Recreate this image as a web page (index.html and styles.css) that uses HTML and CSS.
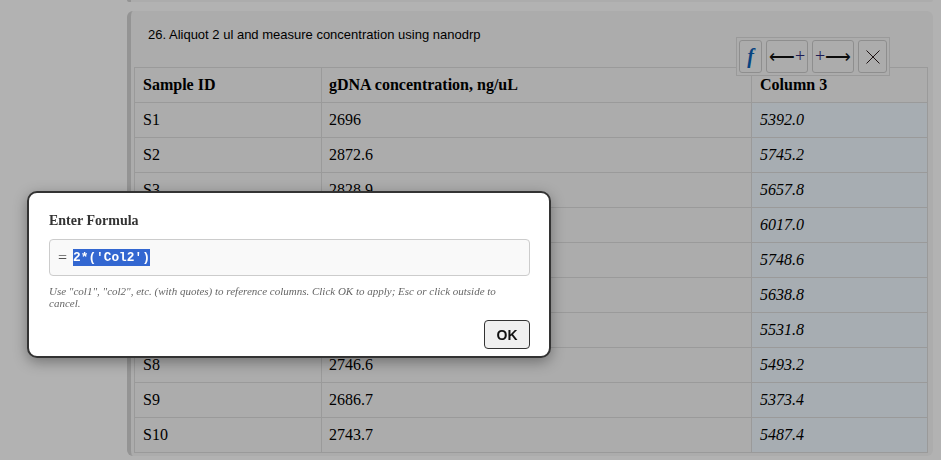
FILE: index.html
```html
<!DOCTYPE html>
<html lang="en">
<head>
    <meta charset="UTF-8">
    <meta name="viewport" content="width=device-width, initial-scale=1.0">
    <title>Protocol step</title>
    <link rel="stylesheet" href="styles.css">
</head>
<body>
    <div class="page">
        <div class="step step-prev"></div>
        <div class="step">
            <p class="step-title">26. Aliquot 2 ul and measure concentration using nanodrp</p>
            <table class="data-table">
                <thead>
                    <tr><th class="col-a">Sample ID</th><th class="col-b">gDNA concentration, ng/uL</th><th>Column 3</th></tr>
                </thead>
                <tbody>
                    <tr><td>S1</td><td>2696</td><td class="calc">5392.0</td></tr>
                    <tr><td>S2</td><td>2872.6</td><td class="calc">5745.2</td></tr>
                    <tr><td>S3</td><td>2828.9</td><td class="calc">5657.8</td></tr>
                    <tr><td>S4</td><td>3008.5</td><td class="calc">6017.0</td></tr>
                    <tr><td>S5</td><td>2874.3</td><td class="calc">5748.6</td></tr>
                    <tr><td>S6</td><td>2819.4</td><td class="calc">5638.8</td></tr>
                    <tr><td>S7</td><td>2765.9</td><td class="calc">5531.8</td></tr>
                    <tr><td>S8</td><td>2746.6</td><td class="calc">5493.2</td></tr>
                    <tr><td>S9</td><td>2686.7</td><td class="calc">5373.4</td></tr>
                    <tr><td>S10</td><td>2743.7</td><td class="calc">5487.4</td></tr>
                </tbody>
            </table>
        </div>
    </div>

    <div class="toolbar">
        <button class="tool tool-f">f</button>
        <button class="tool tool-wide"><span class="arrow">&#10229;</span><span class="plus">+</span></button>
        <button class="tool tool-wide"><span class="plus">+</span><span class="arrow">&#10230;</span></button>
        <button class="tool tool-x">
            <svg width="14" height="14" viewBox="0 0 14 14"><path d="M.5.5 13.5 13.5M13.5.5 .5 13.5" stroke="#2a1a1a" stroke-width="1" fill="none"/></svg>
        </button>
    </div>

    <div class="overlay"></div>

    <div class="modal">
        <h3 class="modal-title">Enter Formula</h3>
        <div class="formula">
            <span class="equals">=</span>
            <span class="formula-text">2*('Col2')</span>
        </div>
        <p class="hint">Use "col1", "col2", etc. (with quotes) to reference columns. Click OK to apply; Esc or click outside to cancel.</p>
        <div class="modal-actions">
            <button class="ok">OK</button>
        </div>
    </div>
</body>
</html>
```

FILE: styles.css
```css
html, body {
    height: 460px;
    overflow: hidden;
}

body {
    margin: 0;
    background-color: #fff;
    font-family: "Liberation Serif", "Times New Roman", serif;
    color: #000;
}

.page {
    padding-left: 127px;
    padding-right: 8px;
}

.step {
    border-left: 4px solid #d4d4d4;
    border-radius: 6px;
    background-color: #f7f7f7;
    height: 445px;
    padding: 0 5px 0 3px;
    box-sizing: border-box;
}

.step-prev {
    height: 2px;
    margin-bottom: 9px;
    padding: 0;
    border-radius: 0 0 6px 6px;
}

.step-title {
    margin: 0;
    padding: 16px 0 0 14px;
    height: 40px;
    box-sizing: content-box;
    font-family: "Liberation Sans", Arial, sans-serif;
    font-size: 13px;
    line-height: 15px;
}

.data-table {
    width: 794px;
    border-collapse: collapse;
    table-layout: fixed;
    font-size: 16px;
}

.data-table th,
.data-table td {
    border: 1px solid #ddd;
    height: 34px;
    padding: 0 8px;
    box-sizing: border-box;
    text-align: left;
}

.data-table th:nth-child(2),
.data-table td:nth-child(2) {
    padding-left: 7px;
}

.data-table tr {
    height: 35px;
}

.col-a {
    width: 187px;
}

.col-b {
    width: 430px;
}

.data-table td.calc {
    background-color: #f0f8ff;
    font-style: italic;
}

.toolbar {
    position: absolute;
    left: 736px;
    top: 37px;
    display: flex;
    gap: 4px;
    padding: 2px;
    background-color: #f7f7f7;
    border: 1px solid #ddd;
}

.tool {
    height: 33px;
    padding: 0;
    display: flex;
    align-items: center;
    justify-content: center;
    background-color: #f7f7f7;
    border: 1px solid #ccc;
    border-radius: 3px;
    font-family: "Liberation Serif", serif;
    font-size: 18px;
    color: #000;
}

.tool-f {
    width: 23px;
    color: #0b62b8;
    font-size: 20px;
    font-weight: bold;
    font-style: italic;
}

.tool-wide {
    width: 42px;
}

.tool-x {
    width: 29px;
}

.arrow {
    color: #111;
}

.plus {
    color: #2b2a7a;
}

.overlay {
    position: fixed;
    top: 0;
    left: 0;
    width: 100%;
    height: 100%;
    background: rgba(0, 0, 0, 0.3);
}

.modal {
    position: absolute;
    left: 27px;
    top: 191px;
    width: 524px;
    height: 167px;
    box-sizing: border-box;
    padding: 19px 19px 19px 20px;
    background-color: #fff;
    border: 2px solid #333;
    border-radius: 10px;
    box-shadow: 0 4px 14px rgba(0, 0, 0, 0.35);
}

.modal-title {
    margin: 0 0 9px;
    font-size: 14px;
    line-height: 18px;
    color: #333;
}

.formula {
    display: flex;
    align-items: center;
    gap: 6px;
    height: 37px;
    box-sizing: border-box;
    padding-left: 8px;
    background-color: #f9f9f9;
    border: 1px solid #ccc;
    border-radius: 4px;
}

.equals {
    font-family: "Liberation Serif", serif;
    font-size: 16px;
    color: #555;
}

.formula-text {
    display: inline-block;
    font-family: "Liberation Mono", monospace;
    font-size: 12.8px;
    font-weight: bold;
    line-height: 17px;
    color: #fff;
    background-color: #3367d1;
}

.hint {
    margin: 9px 0 0;
    font-size: 11px;
    line-height: 12px;
    font-style: italic;
    color: #666;
}

.modal-actions {
    display: flex;
    justify-content: flex-end;
    margin-top: 11px;
}

.ok {
    width: 46px;
    height: 29px;
    padding: 0;
    font-family: "Liberation Sans", Arial, sans-serif;
    font-size: 14px;
    font-weight: bold;
    color: #111;
    background-color: #f0f0f0;
    border: 1px solid #333;
    border-radius: 4px;
}
```
